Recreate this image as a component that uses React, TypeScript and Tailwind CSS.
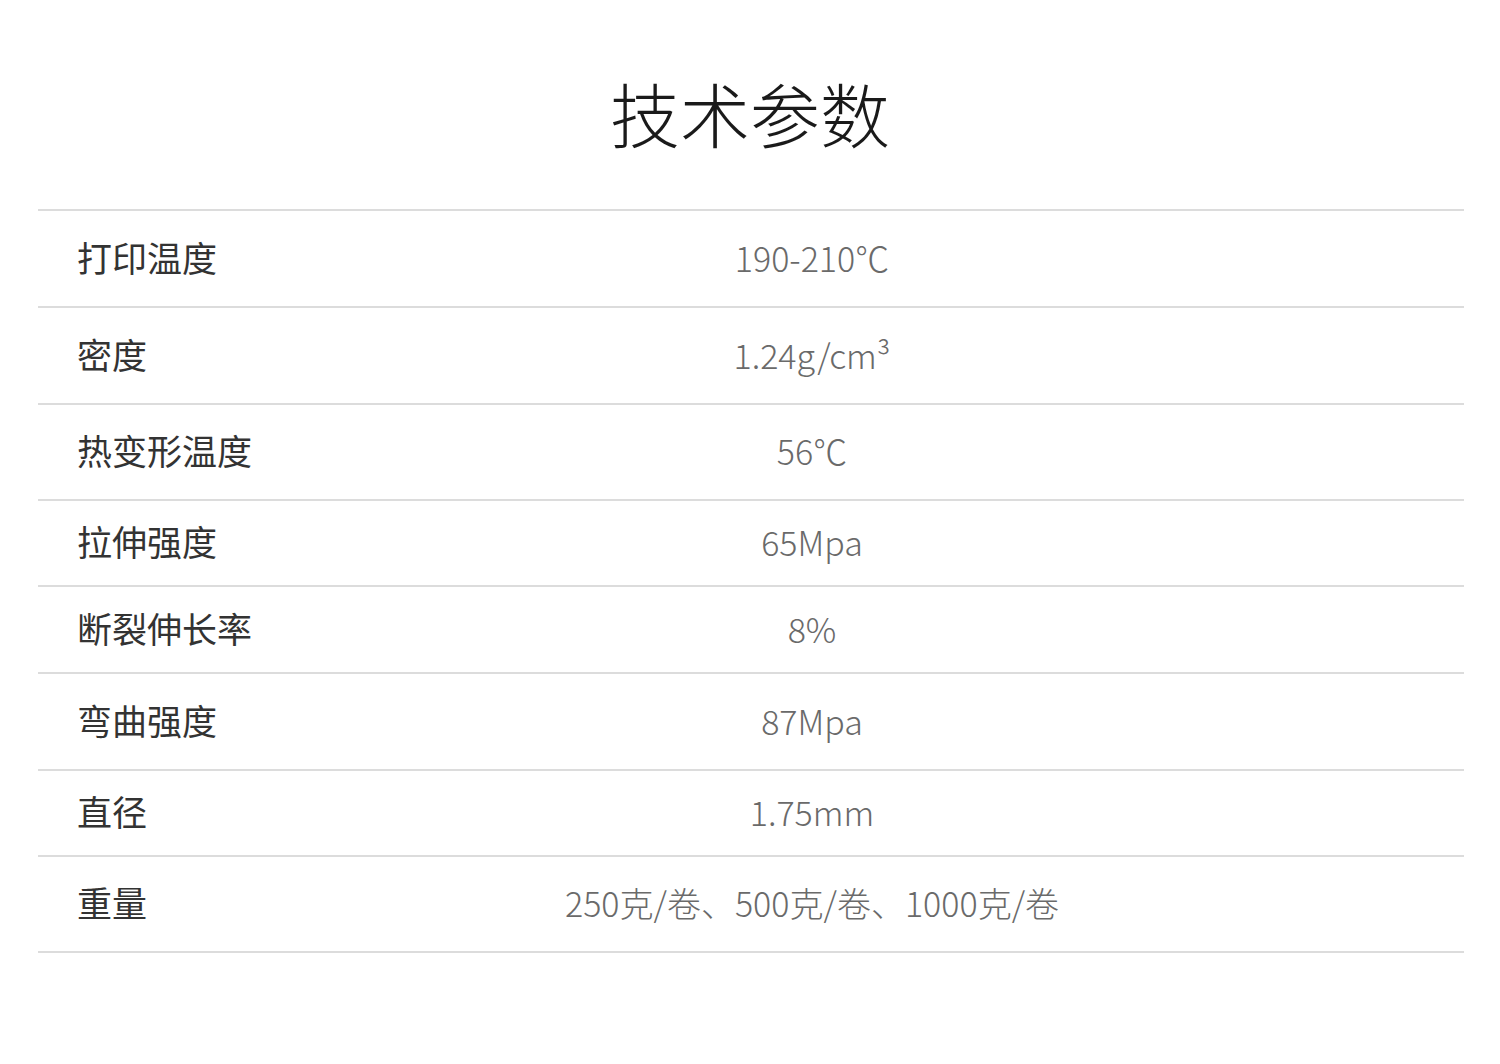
const rows = [
  { label: "打印温度", value: "190-210℃", h: "h-[97px]" },
  { label: "密度", value: "1.24g/cm³", h: "h-[97px]" },
  { label: "热变形温度", value: "56℃", h: "h-[96px]" },
  { label: "拉伸强度", value: "65Mpa", h: "h-[86px]" },
  { label: "断裂伸长率", value: "8%", h: "h-[87px]" },
  { label: "弯曲强度", value: "87Mpa", h: "h-[97px]" },
  { label: "直径", value: "1.75mm", h: "h-[86px]" },
  { label: "重量", value: "250克/卷、500克/卷、1000克/卷", h: "h-[96px]" },
];

const App = () => {
  return (
    <div className="w-[1500px] h-[1064px] bg-white font-['Noto_Sans_CJK_SC','Noto_Sans',sans-serif]">
      <h1 className="pt-[78px] h-[209px] text-center text-[70px] leading-[70px] font-light text-[#1a1a1a]">
        技术参数
      </h1>

      <div className="ml-[38px] mr-[36px] border-t-2 border-[#dcdcdc]">
        {rows.map((row) => (
          <div
            key={row.label}
            className={`grid grid-cols-[280px_1fr] items-center pb-[3px] border-b-2 border-[#dcdcdc] ${row.h}`}
          >
            <div className="pl-[39px] whitespace-nowrap text-[35px] text-[#333333]">{row.label}</div>
            <div className="pr-[158px] text-center whitespace-nowrap text-[34px] font-light text-[#6a6a6a]">
              {row.value}
            </div>
          </div>
        ))}
      </div>
    </div>
  );
};

export default App;
